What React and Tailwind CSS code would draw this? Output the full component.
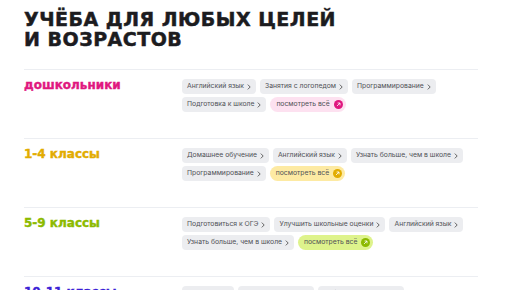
import React from 'react'

const sections = [
  {
    label: 'дошкольники',
    color: 'text-[#e0177f]',
    more: 'bg-[#fde1f0]',
    dot: 'bg-[#e0177f]',
    items: ['Английский язык', 'Занятия с логопедом', 'Программирование', 'Подготовка к школе'],
  },
  {
    label: '1-4 классы',
    color: 'text-[#e2ac00]',
    more: 'bg-[#fdeaa3]',
    dot: 'bg-[#e2ac00]',
    items: ['Домашнее обучение', 'Английский язык', 'Узнать больше, чем в школе', 'Программирование'],
  },
  {
    label: '5-9 классы',
    color: 'text-[#8cba00]',
    more: 'bg-[#def38c]',
    dot: 'bg-[#8cba00]',
    items: ['Подготовиться к ОГЭ', 'Улучшить школьные оценки', 'Английский язык', 'Узнать больше, чем в школе'],
  },
  {
    label: '10-11 классы',
    color: 'text-[#3b1fd6]',
    more: 'bg-[#e3defc]',
    dot: 'bg-[#3b1fd6]',
    items: ['Сдать ЕГЭ', 'Подготовка к ЕГЭ', 'Выбрать профессию', 'Английский язык'],
  },
]

function Chevron() {
  return (
    <svg width="4" height="6" viewBox="0 0 4 6" fill="none">
      <path d="M0.8 0.6 L3.2 3 L0.8 5.4" stroke="#555" strokeWidth="0.9" />
    </svg>
  )
}

function Chip({ text }) {
  return (
    <span className="flex h-[15px] items-center gap-[3px] rounded-[4px] bg-[#ecedf0] pl-[5px] pr-[5px] text-[6.8px] text-[#505257]">
      {text}
      <Chevron />
    </span>
  )
}

export default function App() {
  return (
    <div className="w-[516px] h-[290px] overflow-hidden bg-white px-[24px] pt-[9px] font-['Inter',sans-serif]">
      <h1 className="mb-[20px] font-['DejaVu_Sans',sans-serif] text-[19px] font-bold leading-[20px] tracking-[0.5px] text-[#1c1c1f] [-webkit-text-stroke:0.5px_#1c1c1f]">
        УЧЁБА ДЛЯ ЛЮБЫХ ЦЕЛЕЙ
        <br />И ВОЗРАСТОВ
      </h1>
      <div className="w-[454px]">
        {sections.map((s) => (
          <div key={s.label} className="flex border-t border-[#eceef2] pt-[9px] pb-[26px]">
            <div
              className={`w-[158px] shrink-0 font-['DejaVu_Sans',sans-serif] text-[12px] font-bold leading-[13px] [-webkit-text-stroke:0.4px_currentColor] ${s.color}`}
            >
              {s.label}
            </div>
            <div className="flex flex-1 flex-wrap gap-x-[4px] gap-y-[3px]">
              {s.items.map((it) => (
                <Chip key={it} text={it} />
              ))}
              <span
                className={`flex h-[15px] items-center gap-[4px] rounded-full pl-[6px] pr-[3px] text-[6.8px] text-[#505257] ${s.more}`}
              >
                посмотреть всё
                <span className={`flex h-[9px] w-[9px] items-center justify-center rounded-full ${s.dot}`}>
                  <svg width="5" height="5" viewBox="0 0 5 5" fill="none">
                    <path d="M1 4 L4 1 M1.6 1 H4 V3.4" stroke="white" strokeWidth="0.8" />
                  </svg>
                </span>
              </span>
            </div>
          </div>
        ))}
      </div>
    </div>
  )
}
